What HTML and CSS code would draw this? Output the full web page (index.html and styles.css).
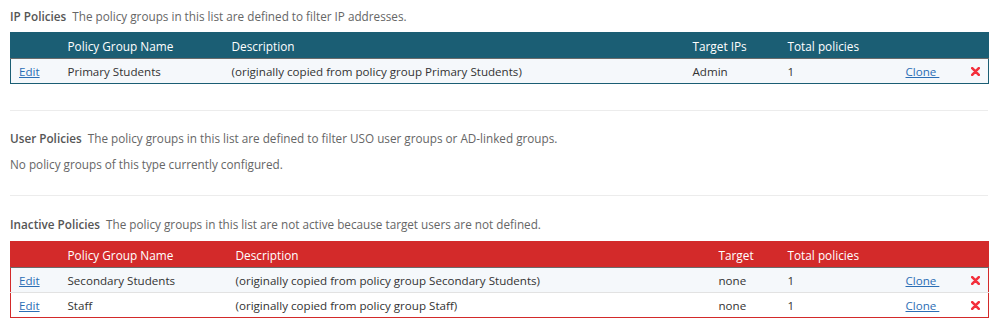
FILE: index.html
```html
<!DOCTYPE html>
<html>
<head>
<meta charset="utf-8">
<link rel="stylesheet" href="styles.css">
</head>
<body>
<div class="page">
  <section class="group first">
    <p class="intro"><span class="title">IP Policies</span> The policy groups in this list are defined to filter IP addresses.</p>
    <table class="policies active">
      <colgroup>
        <col class="c-edit"><col class="c-name-a"><col class="c-desc-a"><col class="c-target-a"><col class="c-total"><col class="c-clone"><col class="c-del">
      </colgroup>
      <thead>
        <tr><th></th><th>Policy Group Name</th><th>Description</th><th>Target IPs</th><th>Total policies</th><th></th><th></th></tr>
      </thead>
      <tbody>
        <tr class="odd"><td><a href="#">Edit</a></td><td>Primary Students</td><td>(originally copied from policy group Primary Students)</td><td>Admin</td><td>1</td><td><a href="#">Clone&nbsp;</a></td><td><svg class="del" width="9" height="9" viewBox="0 0 9 9"><path d="M1.2 1.2L7.8 7.8M7.8 1.2L1.2 7.8"/></svg></td></tr>
      </tbody>
    </table>
  </section>
  <hr class="sep">
  <section class="group middle">
    <p class="intro"><span class="title">User Policies</span> The policy groups in this list are defined to filter USO user groups or AD-linked groups.</p>
    <p class="intro empty">No policy groups of this type currently configured.</p>
  </section>
  <hr class="sep">
  <section class="group last">
    <p class="intro"><span class="title">Inactive Policies</span> The policy groups in this list are not active because target users are not defined.</p>
    <table class="policies inactive">
      <colgroup>
        <col class="c-edit"><col class="c-name-b"><col class="c-desc-b"><col class="c-target-b"><col class="c-total"><col class="c-clone"><col class="c-del">
      </colgroup>
      <thead>
        <tr><th></th><th>Policy Group Name</th><th>Description</th><th>Target</th><th>Total policies</th><th></th><th></th></tr>
      </thead>
      <tbody>
        <tr class="odd"><td><a href="#">Edit</a></td><td>Secondary Students</td><td>(originally copied from policy group Secondary Students)</td><td>none</td><td>1</td><td><a href="#">Clone&nbsp;</a></td><td><svg class="del" width="9" height="9" viewBox="0 0 9 9"><path d="M1.2 1.2L7.8 7.8M7.8 1.2L1.2 7.8"/></svg></td></tr>
        <tr><td><a href="#">Edit</a></td><td>Staff</td><td>(originally copied from policy group Staff)</td><td>none</td><td>1</td><td><a href="#">Clone&nbsp;</a></td><td><svg class="del" width="9" height="9" viewBox="0 0 9 9"><path d="M1.2 1.2L7.8 7.8M7.8 1.2L1.2 7.8"/></svg></td></tr>
      </tbody>
    </table>
  </section>
</div>
</body>
</html>
```

FILE: styles.css
```css
html, body { margin: 0; padding: 0; background: #fff; }
body {
  font-family: "Open Sans", "Liberation Sans", sans-serif;
  font-size: 11.6px;
  color: #333;
}
.page { padding: 0 10px; }
.group.first { padding: 6px 0 26px; }
.group.middle { padding: 17px 0 21px; }
.group.last { padding: 18px 0 0; }
.intro {
  margin: 0;
  line-height: 20px;
  color: #666;
  font-size: 11.72px;
}
.title { font-weight: 600; color: #555; margin-right: 3px; }
.empty { margin-top: 6px; }
.sep {
  border: 0;
  border-top: 1px solid #ececec;
  margin: 0;
  height: 0;
}
.policies {
  width: 978px;
  border-collapse: collapse;
  table-layout: fixed;
  margin-top: 6px;
}
.inactive { margin-top: 7px; }
.policies th {
  text-align: left;
  color: #fff;
  font-weight: 400;
  font-size: 11.8px;
  height: 25px;
  padding: 0 8px;
  white-space: nowrap;
}
.policies td {
  height: 24px;
  padding: 0 8px;
  white-space: nowrap;
  color: #333;
}
.policies tbody tr.odd td { background: #f5f8fb; }
.policies thead tr { border-bottom: 1px solid #6b6b6b; }
.policies tbody tr + tr { border-top: 1px solid #e2e2e2; }
.active thead th { background: #1b5e74; }
.active { border: 1px solid #1b5e74; }
.inactive thead th { background: #d32a2a; }
.inactive { border: 1px solid #d32a2a; }
.policies a { color: #2c6eb5; text-decoration: underline; }
.del { display: block; margin-left: 1px; }
.del path { stroke: #f3303c; stroke-width: 2.6; stroke-linecap: round; fill: none; }
.c-edit { width: 49px; }
.c-name-a { width: 164px; }
.c-desc-a { width: 461px; }
.c-target-a { width: 95px; }
.c-name-b { width: 168px; }
.c-desc-b { width: 483px; }
.c-target-b { width: 69px; }
.c-total { width: 118px; }
.c-clone { width: 64px; }
.c-del { width: 27px; }
```
